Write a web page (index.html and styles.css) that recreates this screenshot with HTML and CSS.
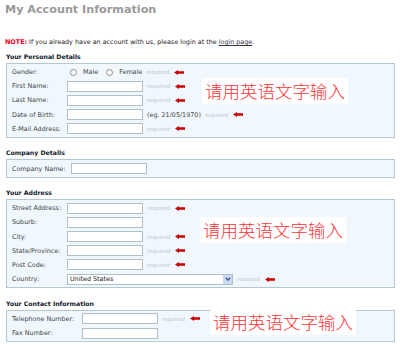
FILE: index.html
```html
<!DOCTYPE html>
<html lang="en">
<head>
  <meta charset="UTF-8" />
  <title>My Account Information</title>
  <link rel="stylesheet" href="styles.css">
</head>
<body>
  <div class="page">
    <h1 class="page-title">My Account Information</h1>

    <p class="note"><span class="note-label">NOTE:</span> If you already have an account with us, please login at the <a href="#">login page</a>.</p>

    <!-- Personal -->
    <h2 class="section-title first">Your Personal Details</h2>
    <div class="form-area">
      <div class="field-grid cols-55">
        <label>Gender:</label>
        <div class="field">
          <span class="radio"></span><span class="radio-text">Male</span>
          <span class="radio"></span><span class="radio-text">Female</span>
          <span class="required">required</span>
          <svg class="arrow" viewBox="0 0 10 5"><path d="M0 2.5 L4 0 V1.3 H10 V3.7 H4 V5 Z"/></svg>
        </div>

        <label>First Name:</label>
        <div class="field">
          <input type="text" class="text-input" />
          <span class="required">required</span>
          <svg class="arrow" viewBox="0 0 10 5"><path d="M0 2.5 L4 0 V1.3 H10 V3.7 H4 V5 Z"/></svg>
        </div>

        <label>Last Name:</label>
        <div class="field">
          <input type="text" class="text-input" />
          <span class="required">required</span>
          <svg class="arrow" viewBox="0 0 10 5"><path d="M0 2.5 L4 0 V1.3 H10 V3.7 H4 V5 Z"/></svg>
        </div>

        <label>Date of Birth:</label>
        <div class="field">
          <input type="text" class="text-input" />
          <span class="hint">(eg. 21/05/1970)</span>
          <span class="required">required</span>
          <svg class="arrow" viewBox="0 0 10 5"><path d="M0 2.5 L4 0 V1.3 H10 V3.7 H4 V5 Z"/></svg>
        </div>

        <label>E-Mail Address:</label>
        <div class="field">
          <input type="text" class="text-input" />
          <span class="required">required</span>
          <svg class="arrow" viewBox="0 0 10 5"><path d="M0 2.5 L4 0 V1.3 H10 V3.7 H4 V5 Z"/></svg>
        </div>
      </div>
    </div>

    <!-- Company -->
    <h2 class="section-title">Company Details</h2>
    <div class="form-area">
      <div class="field-grid cols-59">
        <label>Company Name:</label>
        <div class="field">
          <input type="text" class="text-input" />
        </div>
      </div>
    </div>

    <!-- Address -->
    <h2 class="section-title">Your Address</h2>
    <div class="form-area">
      <div class="field-grid cols-55">
        <label>Street Address:</label>
        <div class="field">
          <input type="text" class="text-input" />
          <span class="required">required</span>
          <svg class="arrow" viewBox="0 0 10 5"><path d="M0 2.5 L4 0 V1.3 H10 V3.7 H4 V5 Z"/></svg>
        </div>

        <label>Suburb:</label>
        <div class="field">
          <input type="text" class="text-input" />
        </div>

        <label>City:</label>
        <div class="field">
          <input type="text" class="text-input" />
          <span class="required">required</span>
          <svg class="arrow" viewBox="0 0 10 5"><path d="M0 2.5 L4 0 V1.3 H10 V3.7 H4 V5 Z"/></svg>
        </div>

        <label>State/Province:</label>
        <div class="field">
          <input type="text" class="text-input" />
          <span class="required">required</span>
          <svg class="arrow" viewBox="0 0 10 5"><path d="M0 2.5 L4 0 V1.3 H10 V3.7 H4 V5 Z"/></svg>
        </div>

        <label>Post Code:</label>
        <div class="field">
          <input type="text" class="text-input" />
          <span class="required">required</span>
          <svg class="arrow" viewBox="0 0 10 5"><path d="M0 2.5 L4 0 V1.3 H10 V3.7 H4 V5 Z"/></svg>
        </div>

        <label>Country:</label>
        <div class="field">
          <span class="select-wrap">
            <select class="select-input">
              <option>United States</option>
            </select>
            <span class="select-btn">
              <svg viewBox="0 0 6 4"><path d="M0.8 0.8 L3 3 L5.2 0.8" /></svg>
            </span>
          </span>
          <span class="required">required</span>
          <svg class="arrow" viewBox="0 0 10 5"><path d="M0 2.5 L4 0 V1.3 H10 V3.7 H4 V5 Z"/></svg>
        </div>
      </div>
    </div>

    <!-- Contact -->
    <h2 class="section-title">Your Contact Information</h2>
    <div class="form-area">
      <div class="field-grid cols-70">
        <label>Telephone Number:</label>
        <div class="field">
          <input type="text" class="text-input" />
          <span class="required">required</span>
          <svg class="arrow" viewBox="0 0 10 5"><path d="M0 2.5 L4 0 V1.3 H10 V3.7 H4 V5 Z"/></svg>
        </div>

        <label>Fax Number:</label>
        <div class="field">
          <input type="text" class="text-input" />
        </div>
      </div>
    </div>

    <!-- notes pasted over the form -->
    <div class="cn-hint hint-personal">请用英语文字输入</div>
    <div class="cn-hint hint-address">请用英语文字输入</div>
    <div class="cn-hint hint-contact">请用英语文字输入</div>
  </div>
</body>
</html>
```

FILE: styles.css
```css
* {
  box-sizing: border-box;
}

body {
  margin: 0;
  background-color: #ffffff;
  font-family: 'DejaVu Sans', Verdana, sans-serif;
  color: #333333;
}

.page {
  position: relative;
  width: 400px;
  padding: 0 5px 0 6px;
}

.page-title {
  margin: 0 0 0 -1px;
  font-size: 11.2px;
  line-height: 19px;
  font-weight: bold;
  color: #999999;
}

.note {
  margin: 17px 0 0 -1px;
  font-size: 6.4px;
  line-height: 12px;
  color: #222222;
}

.note-label {
  color: #ff0022;
  font-weight: bold;
}

.note a {
  color: #333344;
}

.section-title {
  margin: 9.5px 0 0;
  font-size: 6.2px;
  line-height: 12px;
  font-weight: bold;
  color: #10202a;
}

.section-title.first {
  margin-top: 3px;
}

.form-area {
  background-color: #f0f8fd;
  border: 1px solid #b4c8d2;
  padding: 1px 5px;
}

.field-grid {
  display: grid;
  grid-auto-rows: 14.2px;
  align-items: center;
  font-size: 6.4px;
}

.cols-55 { grid-template-columns: 55px auto; }
.cols-59 { grid-template-columns: 59px auto; }
.cols-70 { grid-template-columns: 70px auto; }

.field-grid label {
  color: #444444;
}

.field {
  display: flex;
  align-items: center;
}

.text-input {
  width: 76px;
  height: 11px;
  margin: 0;
  padding: 0;
  border: 1px solid #b0c0c8;
  background-color: #ffffff;
}

.required {
  margin-left: 4px;
  font-size: 5.5px;
  color: #b8c6d0;
}

.hint {
  margin-left: 4px;
  color: #444444;
}

.arrow {
  width: 10px;
  height: 5px;
  margin-left: 5px;
  fill: #cc0000;
}

.radio {
  display: inline-block;
  width: 7px;
  height: 7px;
  margin-left: 3px;
  border: 1px solid #8a8a8a;
  border-radius: 50%;
  background-color: #ffffff;
}

.radio-text {
  margin: 0 0 0 6px;
  color: #444444;
}

.radio-text + .radio {
  margin-left: 8px;
}

.select-wrap {
  position: relative;
  display: inline-block;
  width: 166px;
  height: 11px;
}

.select-input {
  appearance: none;
  -webkit-appearance: none;
  width: 100%;
  height: 100%;
  margin: 0;
  padding: 0 0 0 2px;
  border: 1px solid #b0c0c8;
  border-radius: 0;
  background-color: #ffffff;
  font-family: inherit;
  font-size: 6.4px;
  color: #222222;
}

.select-btn {
  position: absolute;
  top: 1px;
  right: 1px;
  width: 9px;
  height: 9px;
  background-color: #c9d9f0;
  display: flex;
  align-items: center;
  justify-content: center;
}

.select-btn svg {
  width: 6px;
  height: 4px;
  fill: none;
  stroke: #3c5a8a;
  stroke-width: 1.3;
}

.cn-hint {
  position: absolute;
  padding: 1px 3px;
  background-color: #ffffff;
  font-family: 'Noto Sans CJK SC', sans-serif;
  font-size: 17.5px;
  font-weight: 300;
  line-height: 24px;
  color: #ff3333;
}

.hint-personal {
  left: 202px;
  top: 78px;
}

.hint-address {
  left: 200px;
  top: 217px;
}

.hint-contact {
  left: 210px;
  top: 309px;
}
```
